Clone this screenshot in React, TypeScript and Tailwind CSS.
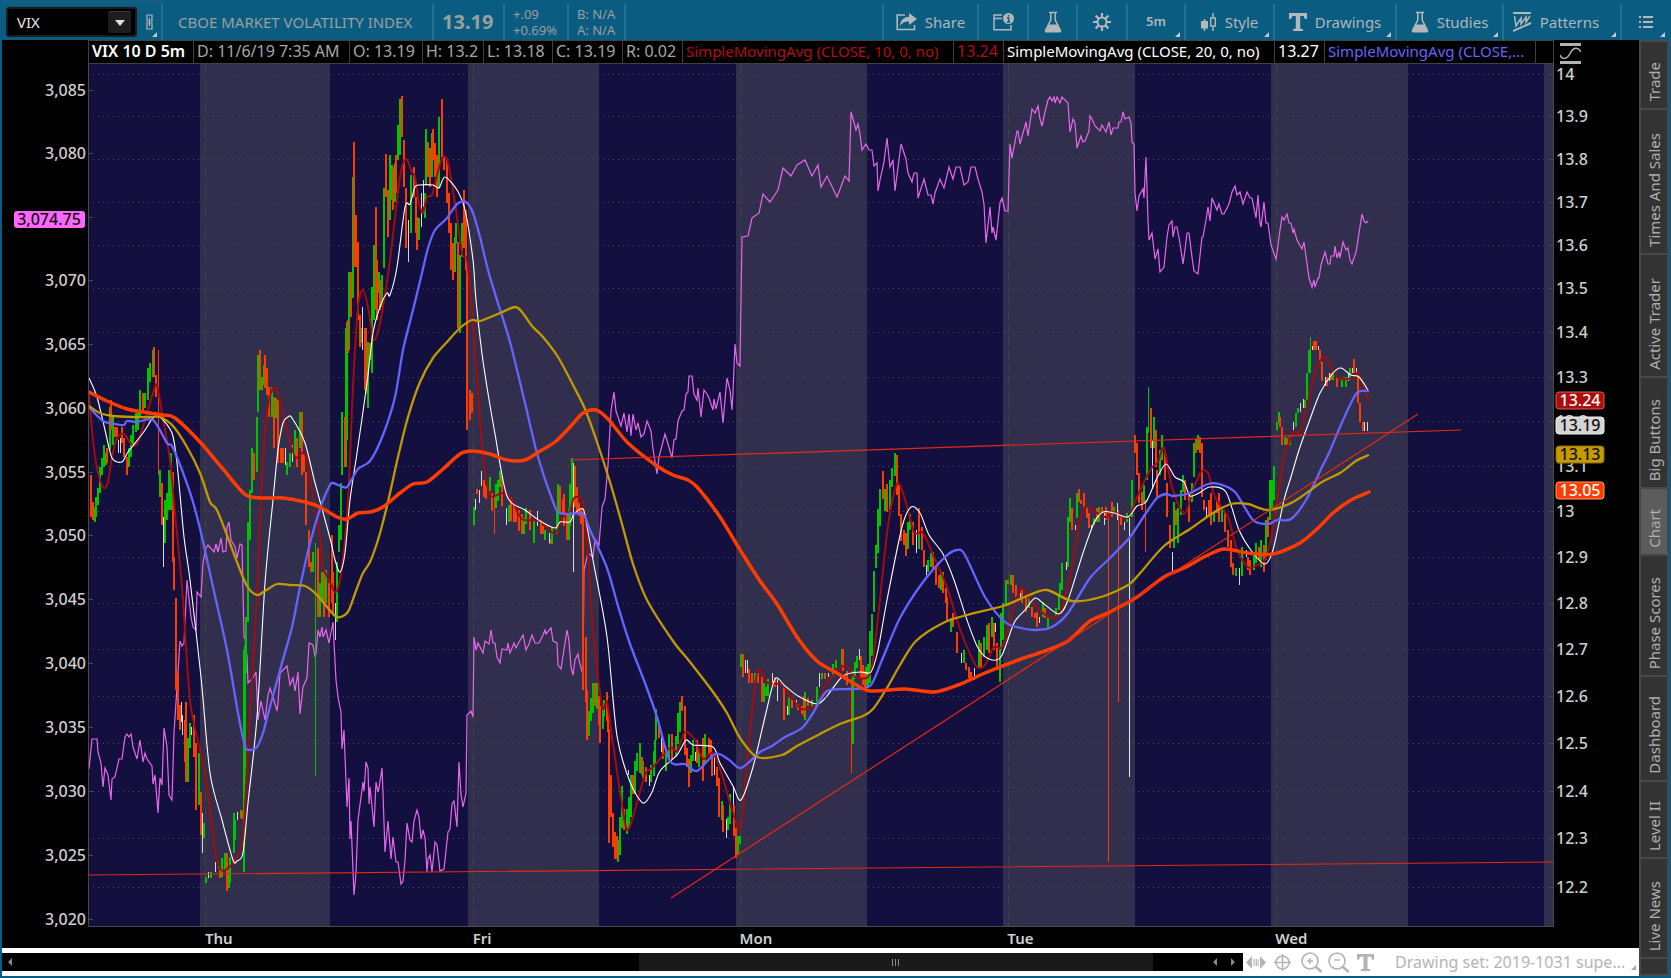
import type { ReactNode } from "react";

const SESSIONS = [
  [200, 130],
  [468, 131],
  [736, 131],
  [1003, 132],
  [1271, 137],
  [1544, 10],
];

const DAYS = [
  { label: "Thu", x: 205 },
  { label: "Fri", x: 473 },
  { label: "Mon", x: 740 },
  { label: "Tue", x: 1008 },
  { label: "Wed", x: 1276 },
];

const LEFT_TICKS: [string, number][] = [
  ["3,085", 90], ["3,080", 153], ["", 217], ["3,070", 280], ["3,065", 344], ["3,060", 408], ["3,055", 472],
  ["3,050", 535], ["3,045", 599], ["3,040", 663], ["3,035", 727], ["3,030", 791], ["3,025", 855], ["3,020", 919],
];

const RIGHT_TICKS: [string, number][] = [
  ["14", 74], ["13.9", 116], ["13.8", 159], ["13.7", 202], ["13.6", 245], ["13.5", 288], ["13.4", 332],
  ["13.3", 377], ["13.2", 421], ["13.1", 466], ["13", 511], ["12.9", 557], ["12.8", 603], ["12.7", 649],
  ["12.6", 696], ["12.5", 743], ["12.4", 791], ["12.3", 838], ["12.2", 887],
];

const BADGES = [
  { label: "13.24", y: 400, fill: "#b00c0c", color: "#ffffff", edge: "#c86060" },
  { label: "13.19", y: 425, fill: "#d4d4d4", color: "#111111", edge: "#eeeeee" },
  { label: "13.13", y: 454, fill: "#c49a00", color: "#111111", edge: "#8a6d00" },
  { label: "13.05", y: 490, fill: "#ff3c00", color: "#ffffff", edge: "#ff9a78" },
];

// Futures overlay on the left scale
const FUTURES =
  "89,769 92,739 97,739 98,752 101,763 103,787 105,768 108,775 111,800 112,779 115,777 119,759 122,759 125,737 127,734 129,737 131,734 133,747 137,759 140,740 143,762 145,753 147,759 152,766 153,784 155,775 158,813 160,778 162,785 164,728 167,747 169,795 172,800 174,733 177,687 180,641 182,646 184,643 187,580 191,617 193,627 196,630 197,592 201,597 203,563 206,548 208,545 214,552 216,544 218,552 221,538 223,552 226,551 227,527 229,522 231,540 235,547 237,558 240,544 242,545 244,637 245,638 247,657 248,683 253,678 256,672 258,720 261,701 265,720 268,695 270,688 273,697 277,711 278,703 280,673 285,668 287,666 290,685 293,678 295,691 298,672 300,714 303,687 307,678 309,643 313,645 315,657 316,654 318,630 320,637 322,627 323,637 326,630 329,643 333,622 334,643 336,680 338,697 341,712 342,749 344,730 347,807 349,778 350,839 351,821 354,895 356,873 358,820 363,782 364,791 366,762 368,768 369,804 370,787 374,827 376,782 378,792 379,788 382,768 383,793 385,852 388,821 391,859 393,837 396,862 398,862 401,884 403,881 405,860 407,823 410,840 412,842 414,821 417,810 419,817 421,839 423,830 425,838 427,872 428,859 430,855 432,872 435,842 437,845 440,871 444,869 448,832 450,829 452,804 454,801 457,827 459,762 461,794 463,807 466,793 467,715 471,711 473,717 474,637 " +
  "476,650 478,643 483,653 485,641 489,644 491,630 493,643 495,643 497,657 500,663 502,649 507,650 508,643 510,653 514,643 516,648 518,644 523,635 526,650 529,644 532,635 535,643 539,643 543,635 545,630 546,634 551,628 553,641 557,643 558,665 561,669 567,630 569,641 571,667 573,675 575,660 578,654 579,660 583,675 584,570 588,553 593,557 595,539 599,545 602,507 605,499 608,465 611,411 614,392 616,411 621,426 624,413 627,432 629,414 631,436 633,414 636,430 638,423 641,437 644,434 647,421 651,431 653,449 657,474 659,457 665,434 668,444 672,458 674,440 676,439 678,421 682,411 684,410 686,394 688,392 689,376 692,376 694,394 697,400 698,388 701,417 704,390 707,394 709,398 713,410 714,399 716,409 720,392 723,423 725,400 727,378 730,390 732,410 733,392 735,344 737,363 740,366 741,300 742,237 748,236 752,218 759,213 763,194 770,202 778,190 783,168 791,176 797,165 805,160 812,176 818,165 821,187 827,176 837,197 845,176 849,181 851,112 856,130 858,124 860,134 862,150 866,144 869,150 872,150 874,166 877,163 878,191 880,180 884,162 887,138 890,167 893,160 895,191 901,144 906,159 908,173 912,182 914,173 917,173 918,198 924,179 928,195 931,195 933,204 935,193 940,179 944,188 949,167 953,179 956,167 960,167 964,185 968,182 971,167 975,167 978,179 982,192 984,204 986,243 990,207 992,233 993,227 996,240 1000,203 1002,198 1005,211 1008,211 1010,144 " +
  "1012,158 1017,131 1018,131 1020,144 1026,122 1028,136 1032,109 1035,113 1038,106 1040,119 1042,126 1045,112 1048,100 1050,97 1052,101 1054,97 1055,103 1057,97 1060,103 1062,97 1068,103 1070,132 1073,119 1075,123 1077,148 1081,136 1083,142 1085,141 1089,131 1090,116 1092,119 1095,126 1100,131 1102,125 1106,132 1109,122 1111,135 1113,128 1118,128 1119,122 1121,122 1123,112 1125,119 1129,117 1131,123 1132,142 1134,144 1135,193 1137,211 1139,196 1143,189 1144,198 1146,157 1148,220 1149,240 1152,233 1155,259 1158,249 1160,272 1164,267 1167,237 1169,225 1172,221 1173,237 1175,227 1177,227 1180,243 1183,264 1185,250 1187,233 1189,233 1192,257 1194,271 1198,274 1202,237 1203,237 1206,220 1208,207 1210,221 1212,198 1217,210 1219,204 1222,214 1224,214 1229,204 1232,192 1235,186 1237,195 1240,192 1243,204 1247,192 1250,198 1252,198 1256,218 1258,195 1260,223 1261,227 1264,202 1266,223 1268,223 1271,245 1276,259 1277,253 1279,237 1282,217 1284,220 1287,214 1289,223 1291,223 1293,233 1294,229 1297,240 1302,249 1304,242 1309,278 1312,287 1314,280 1315,287 1318,278 1319,278 1321,265 1325,252 1328,264 1330,264 1331,256 1334,256 1335,246 1337,258 1339,252 1340,258 1343,242 1346,250 1348,248 1350,260 1352,264 1356,252 1362,214 1364,221 1366,223 1368,221";

const SMA_10 =
  "89,393 92,430 96,463 100,480 104,488 108,482 112,457 117,438 124,434 132,445 138,442 147,413 153,393 157,385 162,413 170,460 175,513 182,587 190,700 200,750 207,787 215,850 221,870 228,868 235,860 243,837 248,747 257,597 262,477 267,413 273,388 278,395 287,430 295,457 302,453 306,457 312,490 320,537 323,567 330,582 336,592 342,567 348,500 353,387 358,307 363,290 368,307 373,338 377,335 383,307 390,260 400,177 406,159 412,172 415,177 419,203 423,213 427,197 432,195 437,175 443,157 448,163 455,203 462,253 467,260 471,300 477,377 483,457 490,495 502,493 512,500 522,519 540,521 555,534 562,518 570,511 574,498 583,501 587,537 593,629 602,706 607,702 613,744 622,805 627,830 633,817 645,775 653,767 670,748 677,751 685,732 695,740 703,759 713,753 722,775 733,813 741,827 747,763 757,673 768,683 782,685 792,698 802,709 817,704 827,683 845,665 855,677 868,677 873,660 880,599 888,526 897,484 905,499 914,532 923,533 934,557 947,587 958,623 967,647 977,667 985,665 994,647 1002,647 1010,620 1021,588 1032,602 1043,613 1052,618 1061,610 1070,577 1079,527 1085,507 1097,513 1106,517 1114,512 1128,518 1137,497 1150,470 1158,462 1164,448 1172,487 1184,514 1193,490 1201,472 1208,473 1215,497 1228,517 1237,550 1248,567 1257,565 1266,558 1273,527 1284,457 1289,443 1293,432 1300,432 1306,410 1315,373 1321,359 1326,358 1338,378 1353,378 1358,373 1364,388 1369,402";

const SMA_20 =
  "89,378 97,397 105,430 112,458 122,462 128,452 143,433 153,418 160,417 172,433 177,463 184,537 190,580 201,677 210,773 222,820 233,860 237,861 243,853 248,803 257,717 265,583 273,500 278,450 283,423 288,417 292,418 305,443 315,483 330,538 335,560 340,572 345,553 350,500 357,453 367,383 373,333 380,307 387,293 390,295 397,267 405,207 410,204 415,187 420,185 433,185 439,188 445,177 457,190 465,210 473,260 476,300 483,361 495,434 507,496 525,510 540,521 555,528 560,522 570,522 574,514 583,509 587,526 593,560 607,637 617,736 630,782 643,803 652,792 660,771 677,755 686,740 693,745 713,747 720,763 733,786 741,800 753,767 765,717 775,679 785,686 798,696 817,704 827,696 843,676 860,672 871,672 878,650 887,600 902,527 911,507 920,513 929,535 943,554 954,580 967,620 978,648 989,659 1001,657 1014,623 1025,610 1035,598 1044,604 1059,614 1068,600 1083,553 1094,523 1103,512 1114,513 1128,517 1137,506 1146,502 1157,478 1166,464 1175,477 1184,482 1190,496 1199,493 1210,487 1226,492 1239,530 1253,553 1265,564 1273,550 1284,500 1291,477 1299,450 1309,422 1320,393 1333,373 1341,368 1351,375 1359,377 1368,390";

const SMA_50 =
  "89,407 103,421 115,424 124,425 127,421 137,422 153,420 167,443 172,446 182,470 193,502 202,537 213,587 227,650 238,713 245,746 249,750 257,747 263,733 267,718 280,670 292,627 300,587 310,543 322,503 330,485 333,483 343,487 348,486 358,469 370,461 383,435 395,397 403,350 413,310 422,273 428,248 435,230 447,218 457,204 466,202 473,213 480,237 488,270 497,300 510,342 525,403 538,457 555,507 560,513 567,514 583,514 590,530 607,568 618,606 630,644 645,683 657,717 670,761 685,764 697,771 715,754 728,759 741,768 760,752 772,746 785,737 802,728 813,713 827,691 850,689 870,686 882,660 900,618 923,582 945,557 957,550 965,555 985,597 1005,622 1021,628 1036,630 1052,627 1068,613 1090,578 1110,558 1130,537 1146,513 1157,498 1166,494 1173,496 1190,493 1208,484 1219,484 1235,492 1253,520 1268,524 1277,520 1291,519 1306,500 1322,467 1329,453 1340,427 1351,403 1358,392 1369,391";

const SMA_100 =
  "89,406 100,413 113,416 133,417 152,417 160,417 173,426 187,447 200,473 210,502 217,510 228,538 237,562 247,586 257,595 265,591 277,584 290,585 305,586 317,595 335,616 343,616 349,610 357,588 363,573 370,562 377,543 383,522 390,493 398,457 408,417 420,382 433,358 447,342 460,328 472,320 480,321 500,313 515,307 522,312 532,326 543,337 558,357 573,385 585,409 597,442 610,482 622,524 633,564 647,600 673,641 690,662 713,692 727,713 740,738 757,757 782,755 797,746 820,734 840,724 863,716 873,709 887,688 900,665 916,641 943,623 967,615 1003,606 1027,596 1047,590 1072,601 1101,597 1128,585 1141,572 1164,546 1190,529 1213,513 1231,504 1248,504 1268,510 1293,502 1322,482 1340,473 1356,461 1369,455";

const SMA_200 =
  "89,392 107,401 127,409 143,412 162,415 175,418 200,442 223,469 246,495 267,498 283,498 305,502 320,507 337,517 347,519 358,513 370,512 383,507 400,493 413,484 427,482 443,469 460,454 472,451 490,454 507,460 525,460 540,451 555,442 570,427 583,413 596,410 608,419 628,443 657,466 673,475 688,480 698,488 720,517 742,553 760,581 777,604 797,637 817,661 837,673 853,683 870,691 905,689 934,692 958,685 985,673 1021,659 1045,651 1068,641 1090,621 1110,612 1137,597 1164,577 1186,567 1204,557 1224,549 1248,553 1273,554 1300,543 1318,528 1333,513 1351,500 1369,492";

// Price bars, one vertical stroke each
const UP_BARS =
  "M95 507V522M96 497V517M98 488V505M100 467V493M102 458V475M104 445V467M106 453V465M110 407V450M113 415V445M129 448V467M131 435V457M133 425V445M136 413V432M138 413V430M140 390V417M145 393V408M148 368V400M150 363V382M153 350V377M160 470V497M165 500V543M167 493V520M169 470V510M171 453V510M188 738V782M190 723V748M199 753V805M204 823V838M206 877V883M211 872V878M222 858V877M225 853V870M229 870V888M230 857V883M234 813V853M235 820V840M241 810V818M244 650V872M245 645V800M246 617V673M248 522V622M250 490V540M252 448V493M257 417V472M258 355V412M262 377V390M264 365V385M272 387V417M276 398V418M287 462V475M290 453V467M295 430V457M300 412V448M313 552V572M320 583V617M322 572V600M326 570V603M337 562V622M339 525V552M341 483V540M342 412V475M346 328V467M347 322V440M349 272V350M353 177V298M362 328V343M368 342V408M372 287V373M374 245V320M379 272V293M382 275V307M384 188V268M390 155V220M392 165V200M395 163V202M398 125V160M400 99V155M411 175V233M419 218V240M425 193V218M426 129V185M432 133V177M439 117V188M455 237V272M456 223V243M460 255V333M462 223V257M474 507V525M490 477V491M496 484V508M498 480V501M500 471V487M509 505V522M524 518V534M526 508V524M534 520V543M545 530V540M552 527V544M557 510V534M558 484V522M569 509V540M570 484V526M572 458V507M589 711V736M591 698V721M593 683V713M597 683V709M603 709V729M604 700V717M618 840V862M620 817V855M622 786V828M627 809V834M629 797V828M631 775V817M635 761V794M637 753V771M640 743V773M643 761V778M651 765V782M654 751V776M655 740V763M656 709V740M666 750V771M669 734V759M676 736V757M678 713V744M680 702V732M691 755V773M693 740V761M699 748V767M705 734V763M722 801V820M728 817V830M730 794V824M738 836V855M740 836V844M741 654V667M755 673V683M764 683V702M766 687V696M768 679V696M789 698V715M805 692V720M812 700V706M817 687V704M822 673V679M833 664V677M836 660V668M842 649V665M853 671V744M855 662V679M857 656V668M866 667V687M868 664V687M870 631V683M872 614V656M874 571V612M876 545V568M878 509V553M880 489V526M885 489V511M890 480V510M892 468V487M895 453V476M908 522V549M910 514V530M919 526V549M928 560V572M931 553V567M941 573V590M951 618V632M964 650V663M979 640V667M984 637V657M987 625V650M992 617V637M1000 650V682M1001 613V650M1003 603V640M1006 580V605M1011 575V585M1029 597V608M1043 602V617M1048 617V627M1056 608V617M1059 595V610M1060 583V597M1062 563V590M1068 517V567M1070 498V522M1077 493V518M1094 518V525M1099 507V522M1114 507V513M1127 513V522M1132 480V517M1144 485V503M1147 427V480M1154 417V448M1160 450V475M1162 435V460M1174 502V548M1178 508V543M1181 490V515M1183 475V492M1192 483V502M1194 443V477M1198 435V450M1214 513V522M1222 510V522M1236 568V576M1242 547V576M1254 553V570M1256 543V563M1261 540V567M1266 520V560M1270 480V520M1272 480V510M1274 466V500M1277 422V430M1279 412V423M1285 437V445M1290 435V445M1296 413V427M1298 408V413M1305 400V408M1307 373V400M1309 350V373M1333 372V380M1342 378V387M1346 377V387M1350 368V380";

const DOWN_BARS =
  "M91 475V517M93 502V520M107 448V463M111 400V430M115 427V437M117 427V440M122 427V443M124 438V457M127 457V475M143 393V413M154 347V377M156 375V397M162 483V525M173 472V562M174 557V590M176 598V690M178 673V720M180 705V730M185 720V762M186 702V782M194 715V757M196 743V810M201 792V835M220 870V878M227 853V891M242 810V819M254 453V480M260 350V390M265 355V388M267 368V395M269 387V417M274 397V448M278 400V463M281 448V463M283 448V463M297 438V467M302 412V475M304 453V472M306 472V525M309 530V567M311 562V572M318 548V617M324 572V617M329 583V617M332 535V603M333 572V613M345 417V467M348 320V353M351 272V317M354 142V267M356 215V267M358 242V320M360 315V347M365 328V390M366 328V393M370 343V360M376 207V310M377 260V320M380 280V310M386 154V197M388 190V237M393 167V210M396 155V193M402 96V137M404 140V187M406 188V248M414 167V197M416 197V233M417 217V250M428 142V177M430 148V187M433 129V160M435 143V177M437 155V197M442 99V157M444 157V170M447 160V203M449 193V233M451 223V270M453 243V280M458 242V328M464 190V248M466 210V270M467 260V430M470 390V420M472 393V413M477 489V494M484 480V497M486 485V499M492 493V511M502 476V506M511 497V521M514 503V522M516 507V522M519 510V531M522 514V534M530 510V530M541 520V534M543 526V534M550 539V544M560 486V514M563 499V514M564 494V526M567 514V540M575 466V507M577 487V514M579 503V516M581 509V524M583 512V690M586 637V702M587 690V740M595 683V706M599 696V725M600 706V743M607 692V721M608 713V732M609 729V843M611 775V817M613 813V847M615 832V859M617 836V859M624 809V830M633 775V794M642 757V775M646 767V782M659 723V738M663 742V759M672 734V759M682 696V711M685 706V755M687 748V767M689 759V787M697 740V763M703 738V781M709 738V755M711 740V759M712 755V776M717 767V786M719 778V817M723 805V832M734 805V836M736 828V858M743 654V677M749 669V683M752 673V683M758 673V683M762 677V702M775 677V687M784 687V720M792 700V708M798 704V710M802 706V714M804 696V717M808 698V706M825 673V679M843 649V671M847 671V685M861 656V679M863 665V685M865 671V687M883 471V499M887 484V512M897 455V495M899 484V516M901 514V541M904 530V545M906 533V556M913 522V545M919 508V535M922 527V550M924 550V567M933 552V570M936 567V585M939 575V588M943 572V593M946 588V603M947 597V622M953 613V627M957 632V653M966 663V670M969 667V678M971 672V678M981 643V667M989 623V653M994 623V650M997 643V670M1008 580V584M1013 575V593M1016 585V597M1022 590V603M1026 597V612M1032 607V617M1035 613V618M1037 612V627M1045 608V618M1072 508V530M1079 489V502M1081 500V504M1084 493V507M1087 508V518M1089 513V528M1097 508V522M1102 507V513M1106 507V520M1112 502V517M1121 517V525M1135 435V453M1137 443V475M1139 473V503M1142 492V510M1151 408V448M1156 430V467M1157 470V497M1165 453V480M1167 483V517M1170 525V548M1176 510V525M1185 480V500M1189 493V522M1196 439V453M1200 437V453M1202 443V497M1204 500V510M1209 500V515M1211 493V525M1217 500V513M1219 493V522M1225 513V532M1228 530V547M1231 540V567M1233 563V575M1248 557V570M1250 560V575M1259 547V560M1264 545V572M1268 517V537M1280 417V427M1282 427V445M1287 438V445M1314 341V350M1316 341V350M1320 350V363M1322 362V381M1327 377V386M1331 373V380M1337 377V387M1354 359V373M1358 375V403M1360 403V422M1363 422V431";

const FLAT_BARS =
  "M118 440V453M120 438V453M163 517V567M181 702V722M182 715V735M191 727V735M202 813V853M208 872V878M215 862V872M218 862V868M237 812V820M285 448V465M292 445V462M335 603V640M362 307V350M408 220V262M421 193V227M423 180V207M475 499V510M479 490V503M481 471V486M506 508V525M537 511V526M549 533V543M573 463V572M628 770V775M649 775V786M661 732V752M695 752V761M714 755V775M726 819V838M733 786V805M745 660V673M747 660V673M772 673V683M777 679V701M787 706V715M796 700V706M819 673V687M828 673V677M859 649V660M916 530V553M926 565V575M961 653V663M974 668V680M995 623V632M1020 593V600M1039 617V623M1066 562V570M1075 525V530M1091 525V530M1104 513V525M1117 503V520M1124 522V530M1152 440V489M1172 552V572M1206 507V517M1239 568V585M1246 550V557M1293 422V430M1300 403V412M1303 399V408M1312 346V350M1318 346V350M1325 377V386M1329 373V381M1348 373V381M1352 368V373M1356 368V373M1364 422V431M1367 422V431";

const LEGEND = [
  { text: "D: 11/6/19 7:35 AM", className: "w-[156px] text-base text-[#a6a6a6]" },
  { text: "O: 13.19", className: "w-[73px] text-base text-[#a6a6a6]" },
  { text: "H: 13.2", className: "w-[61px] text-base text-[#a6a6a6]" },
  { text: "L: 13.18", className: "w-[69px] text-base text-[#a6a6a6]" },
  { text: "C: 13.19", className: "w-[70px] text-base text-[#a6a6a6]" },
  { text: "R: 0.02", className: "w-[60px] text-base text-[#a6a6a6]" },
  { text: "SimpleMovingAvg (CLOSE, 10, 0, no)", className: "w-[271px] text-[15px] text-[#b30d0d]" },
  { text: "13.24", className: "w-[50px] text-base text-[#b30d0d]" },
  { text: "SimpleMovingAvg (CLOSE, 20, 0, no)", className: "w-[271px] text-[15px] text-white" },
  { text: "13.27", className: "w-[50px] text-base text-white" },
  { text: "SimpleMovingAvg (CLOSE,...", className: "w-[211px] text-[15px] text-[#6464ff]" },
];

const TABS = [
  { label: "Trade", className: "h-[66px] bg-[#333333]" },
  { label: "Times And Sales", className: "h-[143px] bg-[#333333]" },
  { label: "Active Trader", className: "h-[121px] bg-[#333333]" },
  { label: "Big Buttons", className: "h-[109px] bg-[#333333]" },
  { label: "Chart", className: "h-[65px] bg-[#5c5c5c]" },
  { label: "Phase Scores", className: "h-[119px] bg-[#333333]" },
  { label: "Dashboard", className: "h-[103px] bg-[#333333]" },
  { label: "Level II", className: "h-[75px] bg-[#333333]" },
  { label: "Live News", className: "h-[98px] bg-[#333333]" },
];

const PLOT_TOP = 64;
const PLOT_HEIGHT = 863;
const PLOT_LEFT = 88;
const PLOT_WIDTH = 1466;

const yPercent = (y: number) => `${((y - PLOT_TOP) / PLOT_HEIGHT) * 100}%`;
const xPercent = (x: number) => `${((x - PLOT_LEFT) / PLOT_WIDTH) * 100}%`;

// Catmull-Rom curve through "x,y x,y ..." points
const smooth = (points: string) => {
  const p = points.split(" ").map((pair) => pair.split(",").map(Number));
  let d = `M${p[0][0]} ${p[0][1]}`;
  for (let i = 0; i < p.length - 1; i++) {
    const a = p[i - 1] ?? p[i];
    const b = p[i];
    const c = p[i + 1];
    const e = p[i + 2] ?? c;
    d += `C${b[0] + (c[0] - a[0]) / 7} ${b[1] + (c[1] - a[1]) / 7} ${c[0] - (e[0] - b[0]) / 7} ${c[1] - (e[1] - b[1]) / 7} ${c[0]} ${c[1]}`;
  }
  return d;
};

const Corner = () => (
  <svg className="absolute right-1 bottom-[3px]" width="5" height="5" viewBox="0 0 5 5" aria-hidden="true">
    <path d="M5 0V5H0Z" fill="#c4c8ca" />
  </svg>
);

const FlaskIcon = () => (
  <svg width="18" height="22" viewBox="0 0 18 22" fill="none" aria-hidden="true">
    <path d="M5 1.5H13M6.8 2V9L1.5 19.5Q1.3 20.8 2.5 20.8H15.5Q16.7 20.8 16.5 19.5L11.2 9V2" stroke="#b4b8ba" strokeWidth="1.5" />
    <path d="M5 13.5H13L16.5 20.5H1.5Z" fill="#b4b8ba" />
  </svg>
);

const ToolButton = ({ label, text, icon, corner, className }: {
  label: string;
  text?: string;
  icon?: ReactNode;
  corner?: boolean;
  className: string;
}) => (
  <button type="button" aria-label={label} className={`relative flex h-9 shrink-0 items-center justify-center gap-2 border-l-2 border-[#257092] text-[#b0b6b9] ${className}`}>
    {icon}
    {text && <span>{text}</span>}
    {corner && <Corner />}
  </button>
);

const Header = () => (
  <header className="flex h-10 shrink-0 items-end bg-[#0b5c81] text-[15px] text-[#9a9fa2]">
    <div className="flex h-10 w-[159px] shrink-0 items-center border-t-4 border-[#115f83]">
      <div className="ml-1 flex h-[30px] w-[131px] items-center rounded-[3px] border-2 border-[#1c1c1c] bg-black">
        <input aria-label="Symbol" defaultValue="VIX" className="w-[100px] bg-transparent pl-[9px] text-[15px] text-[#e6e6e6] outline-none" />
        <button type="button" aria-label="Symbol list" className="flex h-[22px] w-[23px] items-center justify-center rounded-xs border-t border-[#3c3c3c] bg-[#1d1d1d]">
          <svg width="10" height="6" viewBox="0 0 10 6" aria-hidden="true"><path d="M0 0H10L5 6Z" fill="#e0e0e0" /></svg>
        </button>
      </div>
      <button type="button" aria-label="Link symbol" className="relative flex h-9 w-6 items-center justify-center">
        <svg width="7" height="16" viewBox="0 0 7 16" fill="none" stroke="#b4b8ba" strokeWidth="1.2" aria-hidden="true">
          <path d="M2.5 7H1V1H6V7H4.500M2.500 9H1V15H6V9H4.500M3.500 4V12" />
        </svg>
        <Corner />
      </button>
    </div>
    <h1 className="flex h-9 w-[271px] shrink-0 items-center border-l-2 border-[#257092] pl-[15px] whitespace-nowrap">CBOE MARKET VOLATILITY INDEX</h1>
    <div className="flex h-9 w-[71px] shrink-0 items-center border-l-2 border-[#257092] pl-2 text-xl font-bold">13.19</div>
    <div className="flex h-9 w-16 shrink-0 flex-col justify-center border-l-2 border-[#257092] pl-2 text-[13px] leading-4">
      <span>+.09</span>
      <span>+0.69%</span>
    </div>
    <div className="flex h-9 w-[57px] shrink-0 flex-col justify-center border-l-2 border-[#257092] pl-2 text-[13px] leading-4">
      <span>B: N/A</span>
      <span>A: N/A</span>
    </div>
    <div className="h-9 flex-1 border-l-2 border-[#257092]" />
    <ToolButton
      label="Share"
      text="Share"
      className="w-[95px]"
      icon={
        <svg width="21" height="18" viewBox="0 0 21 18" fill="none" aria-hidden="true">
          <path d="M9 2H1.2V16.5H18.5V12" stroke="#b4b8ba" strokeWidth="1.6" />
          <path d="M13 0L21 6L13 12V8.5Q7 8 3.5 13.5Q4.500 4.500 13 3.800Z" fill="#b4b8ba" />
        </svg>
      }
    />
    <ToolButton
      label="Chart info"
      className="w-[50px]"
      icon={
        <svg width="21" height="18" viewBox="0 0 21 18" fill="none" aria-hidden="true">
          <path d="M9 2H1V16.800H18V12M1 5.500H9" stroke="#b4b8ba" strokeWidth="1.5" />
          <circle cx="15.500" cy="5.500" r="5.500" fill="#b4b8ba" />
          <path d="M15.500 2V3.500M14 5H15.700V9M14 9H17.200" stroke="#0b5c81" strokeWidth="1.500" />
        </svg>
      }
    />
    <ToolButton label="Quick studies" className="w-[49px]" icon={<FlaskIcon />} />
    <ToolButton
      label="Chart settings"
      className="w-[50px]"
      icon={
        <svg width="18" height="18" viewBox="0 0 18 18" fill="none" stroke="#b4b8ba" aria-hidden="true">
          <circle cx="9" cy="9" r="4.500" strokeWidth="2" />
          <path d="M9 0V4M9 14V18M0 9H4M14 9H18M2.600 2.600L5.400 5.400M12.600 12.600L15.400 15.400M2.600 15.400L5.400 12.600M12.600 5.400L15.400 2.600" strokeWidth="2.200" />
        </svg>
      }
    />
    <ToolButton label="Time frame" text="5m" corner className="w-[58px] text-[13px] font-semibold" />
    <ToolButton
      label="Style"
      text="Style"
      corner
      className="w-[89px]"
      icon={
        <svg width="16" height="19" viewBox="0 0 16 19" fill="none" stroke="#b4b8ba" aria-hidden="true">
          <path d="M3.500 6V18M12 0V5M12 13V18" strokeWidth="1.500" />
          <rect x="0" y="8" width="7" height="7.500" fill="#b4b8ba" stroke="none" />
          <rect x="9.700" y="5" width="4.600" height="8" strokeWidth="1.400" />
        </svg>
      }
    />
    <ToolButton
      label="Drawings"
      text="Drawings"
      corner
      className="w-[122px]"
      icon={
        <svg width="18" height="18" viewBox="0 0 18 18" aria-hidden="true">
          <path d="M0 0H18V6H16L14.500 3H11.200V15.500L14 16.200V18H4V16.200L6.800 15.500V3H3.500L2 6H0Z" fill="#b4b8ba" />
        </svg>
      }
    />
    <ToolButton label="Studies" text="Studies" corner className="w-[107px]" icon={<FlaskIcon />} />
    <ToolButton
      label="Patterns"
      text="Patterns"
      corner
      className="w-[118px] pr-3"
      icon={
        <svg width="19" height="20" viewBox="0 0 19 20" fill="none" stroke="#b4b8ba" aria-hidden="true">
          <path d="M0 1H18M0 19L18 11" strokeWidth="2" />
          <path d="M1.500 4L3 14L8 6V12L13 5V10L17 4" strokeWidth="1.500" />
        </svg>
      }
    />
    <ToolButton
      label="Menu"
      corner
      className="w-[49px]"
      icon={
        <svg width="14" height="12" viewBox="0 0 14 12" stroke="#b4b8ba" strokeWidth="2" aria-hidden="true">
          <path d="M0 1H2M4 1H14M0 6H2M4 6H14M0 11H2M4 11H14" />
        </svg>
      }
    />
  </header>
);

const Legend = () => (
  <div className="flex h-6 shrink-0">
    <div className="w-[86px] shrink-0" />
    <div className="flex min-w-0 flex-1 overflow-hidden border-y border-[#404040] whitespace-nowrap">
      <div className="w-[105px] shrink-0 border-l border-[#404040] pl-[3px] text-base font-semibold text-white"><span className="block leading-5">VIX 10 D 5m</span></div>
      {LEGEND.map((item, i) => (
        <div key={i} className={`shrink-0 border-l border-[#404040] pl-[3px] ${item.className}`}>
          <span className="block leading-5">{item.text}</span>
        </div>
      ))}
      <div className="flex-1 border-x border-[#404040]" />
    </div>
    <div className="w-[85px] shrink-0 pt-[2px] pl-[6px]">
      <svg width="21" height="22" viewBox="0 0 21 22" fill="none" stroke="#b4b4b4" aria-hidden="true">
        <path d="M0 2.500H21M0 20.500H21" strokeWidth="3" />
        <path d="M0 13C2 18 7 17.500 10 11.500S18 4 21 10" strokeWidth="1.500" />
      </svg>
    </div>
  </div>
);

const LeftAxis = () => (
  <svg className="h-full w-[86px] shrink-0 overflow-visible text-base font-medium" aria-label="Futures scale">
    {LEFT_TICKS.map(([label, y]) => (
      <text key={y} x="84" y={yPercent(y)} dy="6" textAnchor="end" fill="#cfcfcf">{label}</text>
    ))}
    <svg y={yPercent(219)} overflow="visible">
      <rect x="12" y="-8" width="71" height="17" rx="3" fill="#ff66ff" />
      <text x="47" y="6" textAnchor="middle" fill="#111111">3,074.75</text>
    </svg>
  </svg>
);

const RightAxis = () => (
  <svg className="h-full w-[85px] shrink-0 overflow-visible text-base font-medium" aria-label="Price scale">
    {RIGHT_TICKS.map(([label, y]) => (
      <text key={y} x="2" y={yPercent(y)} dy="6" fill="#cfcfcf">{label}</text>
    ))}
    {BADGES.map((badge) => (
      <svg key={badge.label} y={yPercent(badge.y)} overflow="visible">
        <rect x="2" y="-8" width="48" height="17" rx="3" fill={badge.fill} stroke={badge.edge} />
        <text x="26" y="6" textAnchor="middle" fill={badge.color}>{badge.label}</text>
      </svg>
    ))}
  </svg>
);

const Plot = () => (
  <svg className="h-full min-w-0 flex-1" viewBox="88 64 1466 863" preserveAspectRatio="none" fill="none" role="img" aria-label="VIX 5 minute chart">
    <rect x="88" y="64" width="1466" height="863" fill="#131040" />
    {SESSIONS.map(([x, width]) => (
      <rect key={x} x={x} y="64" width={width} height="863" fill="#322f4e" />
    ))}
    {RIGHT_TICKS.map(([label, y]) => (
      <g key={label} stroke="#4a4a46">
        <path d={`M93 ${y + 0.5}H1548`} strokeDasharray="1 4" />
        <path d={`M1549 ${y + 0.5}H1553`} />
      </g>
    ))}
    {LEFT_TICKS.map(([, y]) => (
      <path key={y} d={`M88 ${y + 0.5}H93`} stroke="#4a4a4a" />
    ))}
    {DAYS.map((day) => (
      <path key={day.label} d={`M${day.x + 0.5} 64V927`} stroke="#41413f" strokeDasharray="9 4" />
    ))}
    <polyline points={FUTURES} stroke="#e768ea" strokeWidth="1.200" />
    <g strokeWidth="2" shapeRendering="crispEdges">
      <path d={UP_BARS} stroke="#00c400" />
      <path d={DOWN_BARS} stroke="#ff3c00" />
      <path d={FLAT_BARS} stroke="#d8d8d8" strokeWidth="1" />
    </g>
    <g strokeWidth="1" shapeRendering="crispEdges">
      <path d="M315.500 543V776M1148.500 387V433M1310.500 337V373" stroke="#00c400" />
      <path d="M158.500 350V475M494.500 497V534M851.500 679V773M1108.500 513V862M1118.500 510V702M1145.500 500V552" stroke="#ff3c00" />
      <path d="M1129.500 517V777" stroke="#e8e8e8" />
    </g>
    <g strokeLinejoin="round">
      <path d={smooth(SMA_10)} stroke="#a30c0c" strokeWidth="2" />
      <path d={smooth(SMA_20)} stroke="#ffffff" strokeWidth="1.100" />
      <path d={smooth(SMA_50)} stroke="#6464ff" strokeWidth="2.300" />
      <path d={smooth(SMA_100)} stroke="#c09a00" strokeWidth="2.300" />
      <path d={smooth(SMA_200)} stroke="#ff3c00" strokeWidth="3.500" strokeLinecap="round" />
    </g>
    <path d="M88 875L1554 862M570 460L1461 430M671 898L1418 414" stroke="#e42a10" strokeWidth="1.200" />
    <path d="M88.500 64V926.500H1553.500V64" stroke="#4a4a4a" />
  </svg>
);

const ScrollBar = () => (
  <div className="flex h-7 shrink-0 items-center bg-white">
    <div className="flex h-[18px] min-w-0 flex-1 items-center bg-black">
      <button type="button" aria-label="Scroll left" className="flex w-4 justify-center">
        <svg width="4" height="8" viewBox="0 0 4 8"><path d="M4 0V8L0 4Z" fill="#8a8a8a" /></svg>
      </button>
      <div className="flex-1" />
      <div className="flex h-full w-[514px] items-center justify-center bg-[#191919]">
        <svg width="8" height="7" viewBox="0 0 8 7" stroke="#8a8a8a"><path d="M0.500 0V7M3.500 0V7M6.500 0V7" /></svg>
      </div>
      <div className="flex w-[90px] items-center justify-end gap-[6px] pr-1">
        <button type="button" aria-label="Step left" className="flex w-3 justify-center">
          <svg width="4" height="8" viewBox="0 0 4 8"><path d="M4 0V8L0 4Z" fill="#8a8a8a" /></svg>
        </button>
        <button type="button" aria-label="Step right" className="flex w-3 justify-center">
          <svg width="4" height="8" viewBox="0 0 4 8"><path d="M0 0V8L4 4Z" fill="#8a8a8a" /></svg>
        </button>
      </div>
    </div>
    <div className="flex w-[152px] shrink-0 items-center pl-[3px] text-[#b4b4b4]">
      <button type="button" aria-label="Expand" className="w-7">
        <svg width="20" height="13" viewBox="0 0 20 13"><path d="M6 0V13L0 6.500ZM14 0V13L20 6.500ZM7.500 3H8.700V10H7.500ZM9.700 3H10.900V10H9.700ZM11.700 3H12.700V10H11.700Z" fill="currentColor" /></svg>
      </button>
      <button type="button" aria-label="Crosshair" className="w-[27px]">
        <svg width="17" height="17" viewBox="0 0 17 17" fill="none" stroke="currentColor" strokeWidth="1.500"><circle cx="8.500" cy="8.500" r="6.500" /><path d="M8.500 0V17M0 8.500H17" /></svg>
      </button>
      <button type="button" aria-label="Zoom in" className="w-[27px]">
        <svg width="22" height="21" viewBox="0 0 22 21" fill="none" stroke="currentColor"><circle cx="9" cy="9" r="8" strokeWidth="1.600" /><path d="M6 9H12M9 6V12" strokeWidth="1.500" /><path d="M14.500 14.500L20.500 20" strokeWidth="2.500" /></svg>
      </button>
      <button type="button" aria-label="Zoom out" className="w-[29px]">
        <svg width="22" height="21" viewBox="0 0 22 21" fill="none" stroke="currentColor"><circle cx="9" cy="9" r="8" strokeWidth="1.600" /><path d="M6 8H12" strokeWidth="1.500" /><path d="M14.500 14.500L20.500 20" strokeWidth="2.500" /></svg>
      </button>
      <button type="button" aria-label="Text tool">
        <svg width="17" height="17" viewBox="0 0 18 18"><path d="M0 0H18V6H16L14.500 3H11.200V15.500L14 16.200V18H4V16.200L6.800 15.500V3H3.500L2 6H0Z" fill="currentColor" /></svg>
      </button>
    </div>
    <button type="button" className="relative h-7 w-[244px] shrink-0 text-left text-base whitespace-nowrap text-[#b4b4b4]">
      Drawing set: 2019-1031 supe...
      <svg className="absolute right-[3px] bottom-[6px]" width="5" height="5" viewBox="0 0 5 5"><path d="M5 0V5H0Z" fill="#a8a8a8" /></svg>
    </button>
  </div>
);

const SideTabs = () => (
  <nav className="flex w-[30px] shrink-0 flex-col gap-[2px] overflow-hidden bg-[#484848] px-[2px] py-[2px]">
    {TABS.map((tab) => (
      <button key={tab.label} type="button" className={`flex w-[26px] shrink-0 items-end justify-center pb-[6px] text-[15px] whitespace-nowrap text-[#b0b0b0] ${tab.className}`}>
        <span className="rotate-180 [writing-mode:vertical-rl]">{tab.label}</span>
      </button>
    ))}
    <div className="flex-1 bg-[#333333]" />
  </nav>
);

const App = () => {
  return (
    <div className="flex h-screen flex-col overflow-hidden border-x-2 border-b-2 border-[#0b5c81] bg-black font-['Noto_Sans',sans-serif]">
      <Header />
      <div className="flex min-h-0 flex-1">
        <main className="flex min-w-0 flex-1 flex-col">
          <Legend />
          <div className="flex min-h-0 flex-1">
            <LeftAxis />
            <Plot />
            <RightAxis />
          </div>
          <div className="flex h-[21px] shrink-0 px-[86px]">
            <svg className="h-full w-full overflow-visible text-[15px] font-semibold" aria-label="Days">
              {DAYS.map((day) => (
                <text key={day.label} x={xPercent(day.x)} y="17" fill="#cfcfcf">{day.label}</text>
              ))}
            </svg>
          </div>
          <ScrollBar />
        </main>
        <SideTabs />
      </div>
    </div>
  );
};

export default App;
